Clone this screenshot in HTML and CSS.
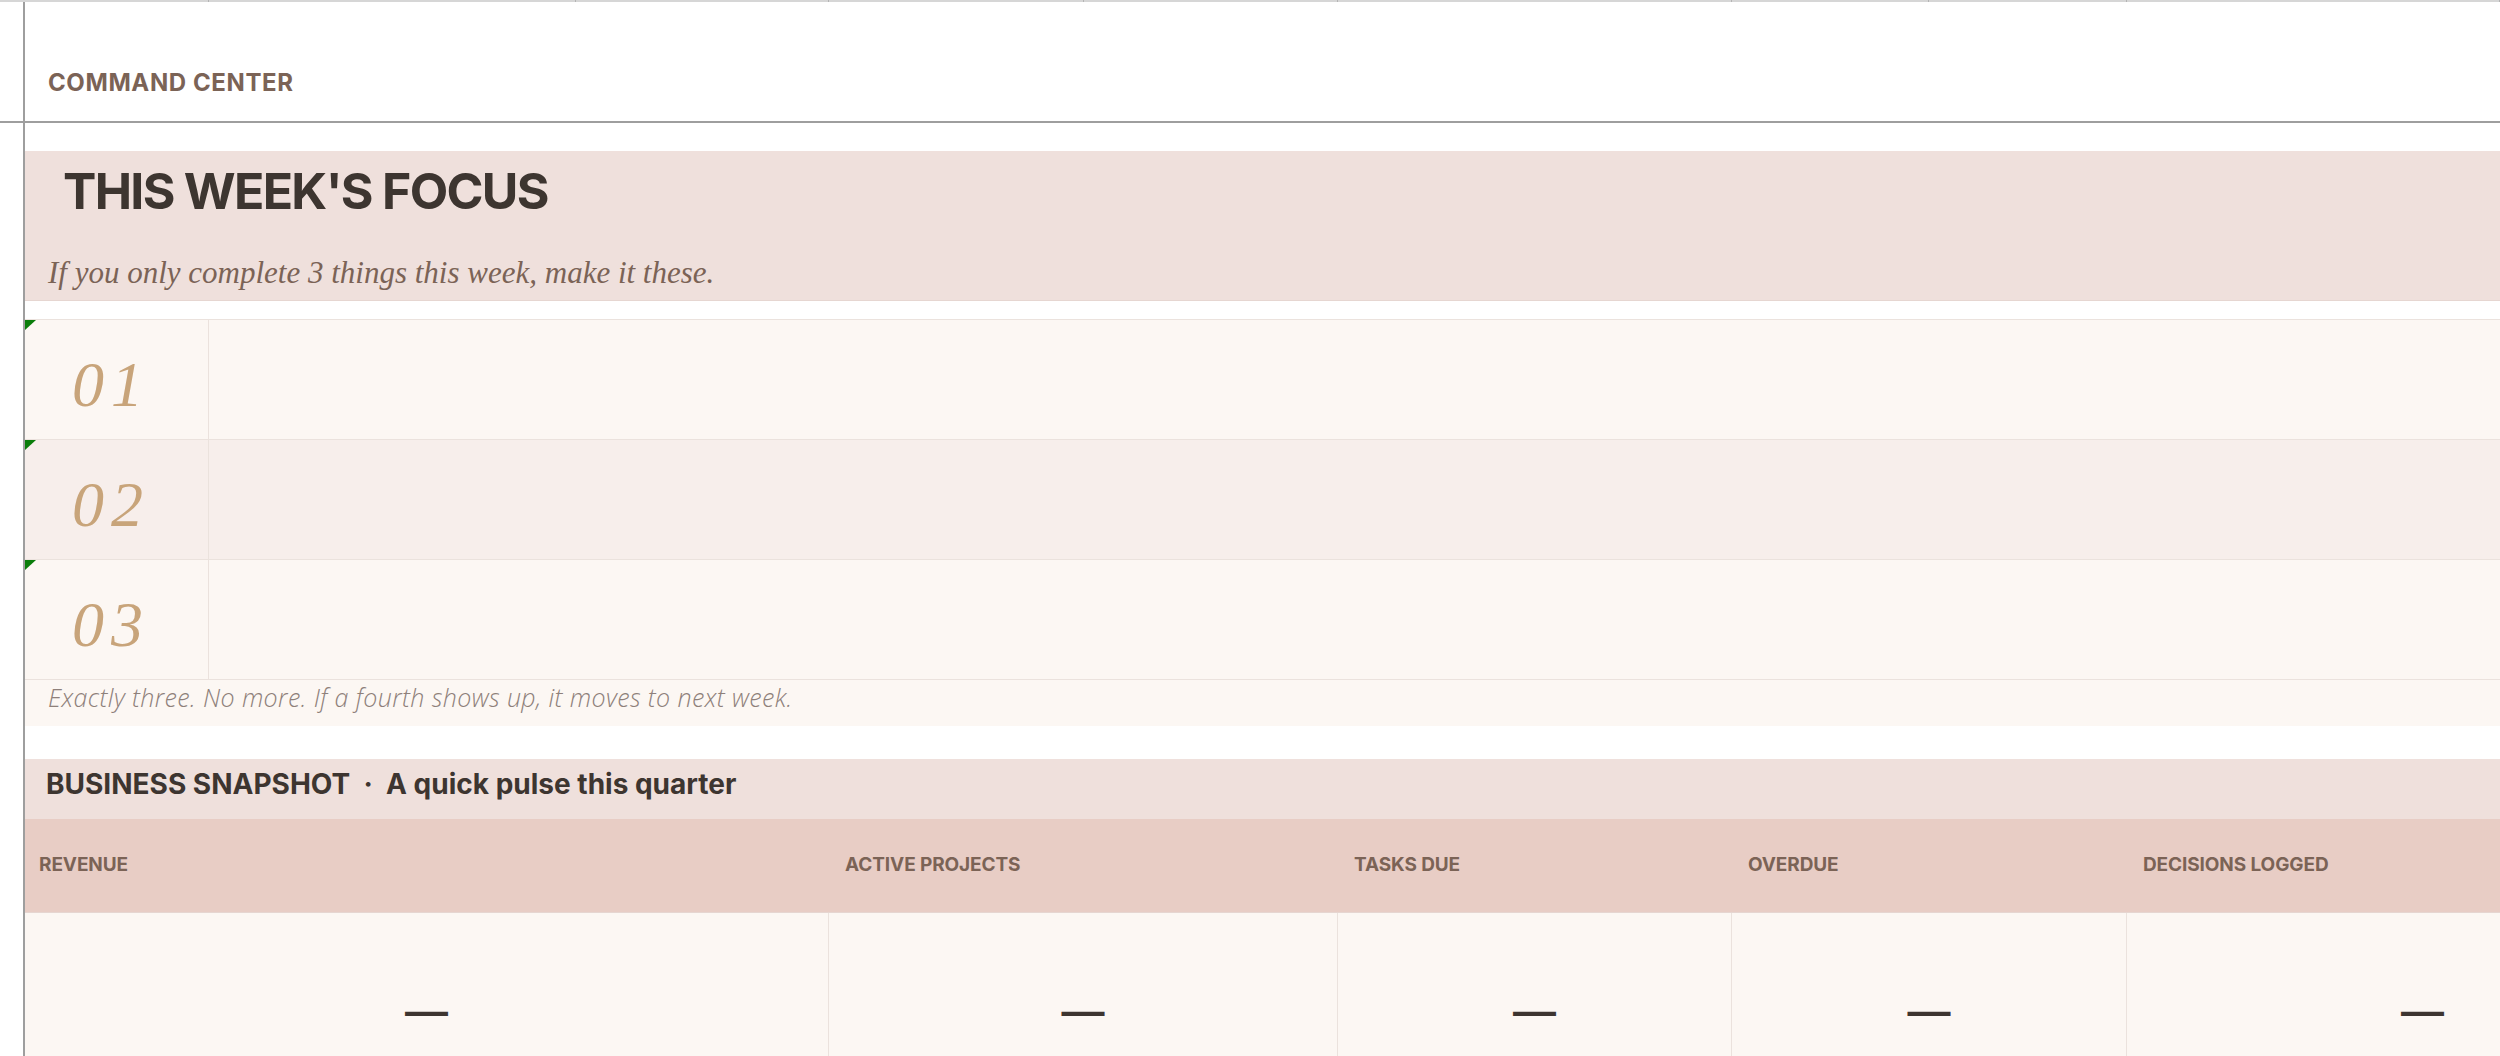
FILE: index.html
```html
<!DOCTYPE html>
<html lang="en">
<head>
    <meta charset="UTF-8">
    <meta name="viewport" content="width=device-width, initial-scale=1.0">
    <title>Command Center</title>
    <link rel="stylesheet" href="styles.css">
</head>
<body>

    <div class="top-ruler">
        <span></span><span></span><span></span><span></span><span></span>
        <span></span><span></span><span></span><span></span>
    </div>

    <header class="header-bar">
        <div class="header-inner">
            <h2 class="sheet-name">COMMAND CENTER</h2>
        </div>
    </header>

    <main class="sheet">

        <section class="focus-band">
            <h1>THIS WEEK'S FOCUS</h1>
            <p>If you only complete 3 things this week, make it these.</p>
        </section>

        <div class="focus-list">
            <div class="focus-row">
                <div class="num">01</div>
                <div class="task"></div>
            </div>
            <div class="focus-row alt">
                <div class="num">02</div>
                <div class="task"></div>
            </div>
            <div class="focus-row">
                <div class="num">03</div>
                <div class="task"></div>
            </div>
            <div class="focus-note">Exactly three. No more. If a fourth shows up, it moves to next week.</div>
        </div>

        <section class="snapshot">
            <h3 class="snapshot-title">BUSINESS SNAPSHOT &nbsp;·&nbsp; A quick pulse this quarter</h3>

            <div class="metrics labels">
                <div>REVENUE</div>
                <div>ACTIVE PROJECTS</div>
                <div>TASKS DUE</div>
                <div>OVERDUE</div>
                <div>DECISIONS LOGGED</div>
            </div>

            <div class="metrics values">
                <div>—</div>
                <div>—</div>
                <div>—</div>
                <div>—</div>
                <div>—</div>
            </div>
        </section>

    </main>

</body>
</html>
```

FILE: styles.css
```css
/* reset */
* {
    margin: 0;
    padding: 0;
    box-sizing: border-box;
}

body {
    background: #fff;
    overflow: hidden;
    font-family: "Inter", "Liberation Sans", sans-serif;
    color: #3d3530;
}

/* grid ruler along the top edge */
.top-ruler {
    height: 2px;
    background: #d6d6d6;
    display: grid;
    grid-template-columns: 209px 367px 253px 255px 254px 394px 197px 198px 1fr;
}

.top-ruler span {
    border-right: 1px solid #b4b4b4;
}

/* frozen header row */
.header-bar {
    height: 121px;
    border-bottom: 2px solid #9e9e9e;
}

.header-inner {
    height: 100%;
    margin-left: 23px;
    border-left: 2px solid #9e9e9e;
    padding: 67px 0 0 23px;
}

.sheet-name {
    font-size: 24px;
    line-height: 1.2;
    font-weight: 700;
    color: #7b6356;
    letter-spacing: 0.6px;
}

.sheet {
    margin-left: 23px;
    border-left: 2px solid #9e9e9e;
    padding-top: 28px;
    min-height: calc(100vh - 123px);
}

/* this week's focus */
.focus-band {
    height: 150px;
    background: #efe0dc;
    border-bottom: 1px solid #e6d6d1;
    padding-top: 15px;
}

.focus-band h1 {
    font-size: 50px;
    line-height: 50px;
    font-weight: 700;
    padding-left: 38px;
    letter-spacing: -1.7px;
}

.focus-band p {
    margin-top: 39px;
    padding-left: 23px;
    font-family: "Liberation Serif", serif;
    font-style: italic;
    font-size: 31px;
    line-height: 36px;
    color: #7b6356;
}

.focus-list {
    margin-top: 18px;
    border-top: 1px solid #ebe2dd;
}

.focus-row {
    position: relative;
    height: 120px;
    display: grid;
    grid-template-columns: 184px 1fr;
    background: #fcf7f3;
    border-bottom: 1px solid #ebe2dd;
}

.focus-row.alt {
    background: #f7eeeb;
}

/* little green corner marker */
.focus-row::before {
    content: "";
    position: absolute;
    top: 0;
    left: 0;
    border-top: 10px solid #0a7d0a;
    border-right: 11px solid transparent;
}

.num {
    border-right: 1px solid #ebe2dd;
    padding: 34px 0 0 47px;
    font-family: "Liberation Serif", serif;
    font-style: italic;
    font-size: 64px;
    line-height: 62px;
    letter-spacing: 7px;
    color: #c8a47a;
}

.focus-note {
    height: 46px;
    background: #fcf7f3;
    padding-left: 23px;
    font-family: "Open Sans", sans-serif;
    font-style: italic;
    font-weight: 300;
    font-size: 25px;
    line-height: 35px;
    letter-spacing: 0.38px;
    color: #8e807a;
}

/* business snapshot */
.snapshot {
    margin-top: 33px;
}

.snapshot-title {
    height: 60px;
    background: #efe0dc;
    padding-left: 21px;
    font-size: 28px;
    line-height: 50px;
    font-weight: 700;
    letter-spacing: 0;
}

.metrics {
    display: grid;
    grid-template-columns: 804px 509px 394px 395px 592px;
}

.labels {
    height: 94px;
    background: #e8cdc5;
    border-bottom: 1px solid #e6d6d1;
}

.labels div {
    display: flex;
    align-items: center;
    padding-left: 16px;
    padding-bottom: 2px;
    font-size: 19px;
    font-weight: 700;
    color: #7b6356;
    letter-spacing: -0.1px;
}

.labels div:first-child {
    padding-left: 14px;
}

.values {
    height: 200px;
    background: #fcf7f3;
}

.values div {
    display: flex;
    align-items: center;
    justify-content: center;
    padding-bottom: 6px;
    border-right: 1px solid #ebe2dd;
    font-family: "Liberation Sans", sans-serif;
    font-weight: 700;
    font-size: 43px;
    line-height: 1;
    color: #3d3530;
}
```
